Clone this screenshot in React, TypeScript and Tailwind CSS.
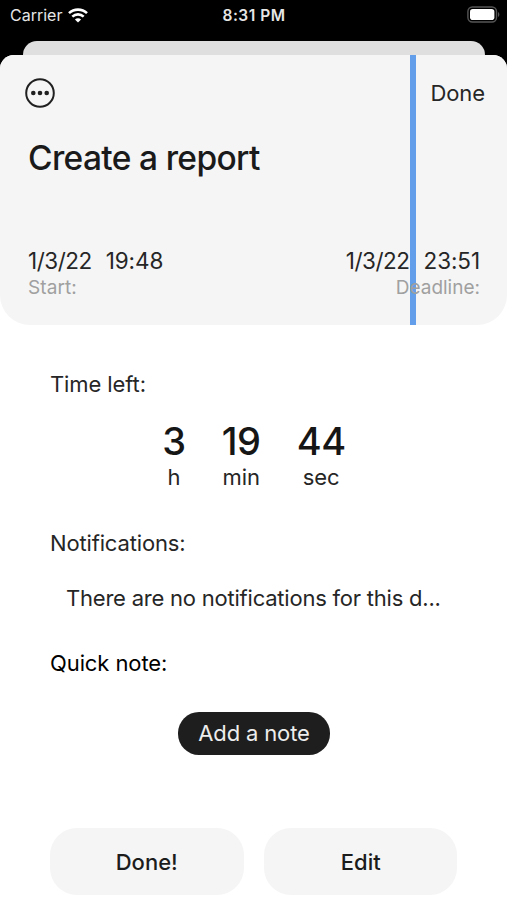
import React from "react";

function StatusBar() {
  return (
    <div className="grid h-[30px] grid-cols-3 items-center pl-[10px] pr-[7px] text-[#e6e6e6]">
      <div className="flex items-center gap-[6px]">
        <span className="text-[16px] leading-[30px]">Carrier</span>
        <svg width="20" height="15" viewBox="0 0 20 15" fill="none" stroke="#fff" strokeWidth="2.6">
          <path d="M1 5.1C6 .4 14 .4 19 5.1" />
          <path d="M4.3 8.6C7.6 5.6 12.4 5.6 15.7 8.6" />
          <path d="M10 14.6 6.9 11.5C8.6 9.9 11.4 9.9 13.1 11.5Z" fill="#fff" stroke="none" />
        </svg>
      </div>
      <span className="-ml-[2px] pt-[2px] text-center text-[15.5px] font-semibold leading-[28px] tracking-[0.5px]">8:31 PM</span>
      <svg className="-mt-[2px] justify-self-end" width="33" height="17" viewBox="0 0 33 17">
        <rect x="0.9" y="1" width="28.6" height="15" rx="4.5" fill="none" stroke="#555" strokeWidth="1.4" />
        <rect x="3" y="3" width="24.4" height="11" rx="2.8" fill="#fff" />
        <path d="M31 6C32.8 6.7 32.8 10.3 31 11Z" fill="#555" />
      </svg>
    </div>
  );
}

function MoreIcon() {
  return (
    <svg width="30" height="30" viewBox="0 0 30 30">
      <circle cx="15" cy="15" r="13.8" fill="none" stroke="#202020" strokeWidth="2" />
      <circle cx="8.3" cy="15" r="2.3" fill="#202020" />
      <circle cx="15" cy="15" r="2.3" fill="#202020" />
      <circle cx="21.7" cy="15" r="2.3" fill="#202020" />
    </svg>
  );
}

function DateTime({ date, time }: { date: string; time: string }) {
  return (
    <div className="flex gap-[14px] text-[22.5px] leading-[27px]">
      <span className="tracking-[-0.5px]">{date}</span>
      <span className="tracking-[-0.1px]">{time}</span>
    </div>
  );
}

function TaskHeader() {
  return (
    <header className="relative h-[270px] rounded-t-[14px] rounded-b-[30px] bg-[#f5f5f5]">
      <div className="absolute inset-y-0 left-[410px] w-[6px] bg-[#629ee9]" />
      <div className="relative flex h-full flex-col pl-[28px] pr-[27px]">
        <div className="-ml-[3px] -mr-[5px] flex h-[76px] items-center justify-between">
          <MoreIcon />
          <span className="text-[22px] tracking-[-0.1px]">Done</span>
        </div>
        <h1 className="mt-[1px] text-[33.5px] font-medium leading-[52px] tracking-[-0.65px] text-[#1a1a1a]">Create a report</h1>
        <div className="mt-[63px] flex justify-between">
          <div>
            <DateTime date="1/3/22" time="19:48" />
            <div className="text-[19px] leading-[27px] tracking-[0.1px] text-[#a0a0a0]">Start:</div>
          </div>
          <div className="text-right">
            <DateTime date="1/3/22" time="23:51" />
            <div className="text-[19px] leading-[27px] text-[#a0a0a0]">Deadline:</div>
          </div>
        </div>
      </div>
    </header>
  );
}

function TimeUnit({ value, unit }: { value: string; unit: string }) {
  return (
    <div className="flex flex-col items-center">
      <span className="text-[38px] font-[450] leading-[41px] tracking-[-0.4px] text-[#161616]">{value}</span>
      <span className="text-[22px] leading-[30px]">{unit}</span>
    </div>
  );
}

export default function App() {
  return (
    <div className="flex h-[900px] w-[507px] flex-col overflow-hidden bg-black font-['Inter','Liberation_Sans',sans-serif] text-[#262626]">
      <StatusBar />
      <div className="ml-[23px] mr-[22px] mt-[11px] h-[14px] rounded-t-[14px] bg-[#dfdfdf]" />
      <main className="flex flex-1 flex-col rounded-t-[14px] bg-white">
        <TaskHeader />
        <section className="flex flex-1 flex-col px-[50px] text-[22px] leading-[30px]">
          <h2 className="mt-[44px] tracking-[-0.1px]">Time left:</h2>
          <div className="mt-[22px] flex justify-center gap-[36px] pl-[1px]">
            <TimeUnit value="3" unit="h" />
            <TimeUnit value="19" unit="min" />
            <TimeUnit value="44" unit="sec" />
          </div>
          <h2 className="mt-[36px] tracking-[-0.15px]">Notifications:</h2>
          <p className="ml-[16px] mt-[25px] whitespace-nowrap tracking-[-0.22px]">There are no notifications for this d...</p>
          <h2 className="mt-[35px] tracking-[-0.1px] text-black">Quick note:</h2>
          <button className="mt-[34px] h-[43px] w-[152px] self-center rounded-[21px] bg-[#1e1e1e] pb-[2px] pl-[1px] tracking-[-0.15px] text-[#ededed]">Add a note</button>
          <div className="mt-[73px] flex gap-[20px] text-[22px] font-medium text-[#1c1c1c]">
            <button className="h-[67px] w-[194px] rounded-[27px] bg-[#f5f5f5]">Done!</button>
            <button className="h-[67px] w-[194px] rounded-[27px] bg-[#f5f5f5] pl-[1px]">Edit</button>
          </div>
        </section>
      </main>
    </div>
  );
}
